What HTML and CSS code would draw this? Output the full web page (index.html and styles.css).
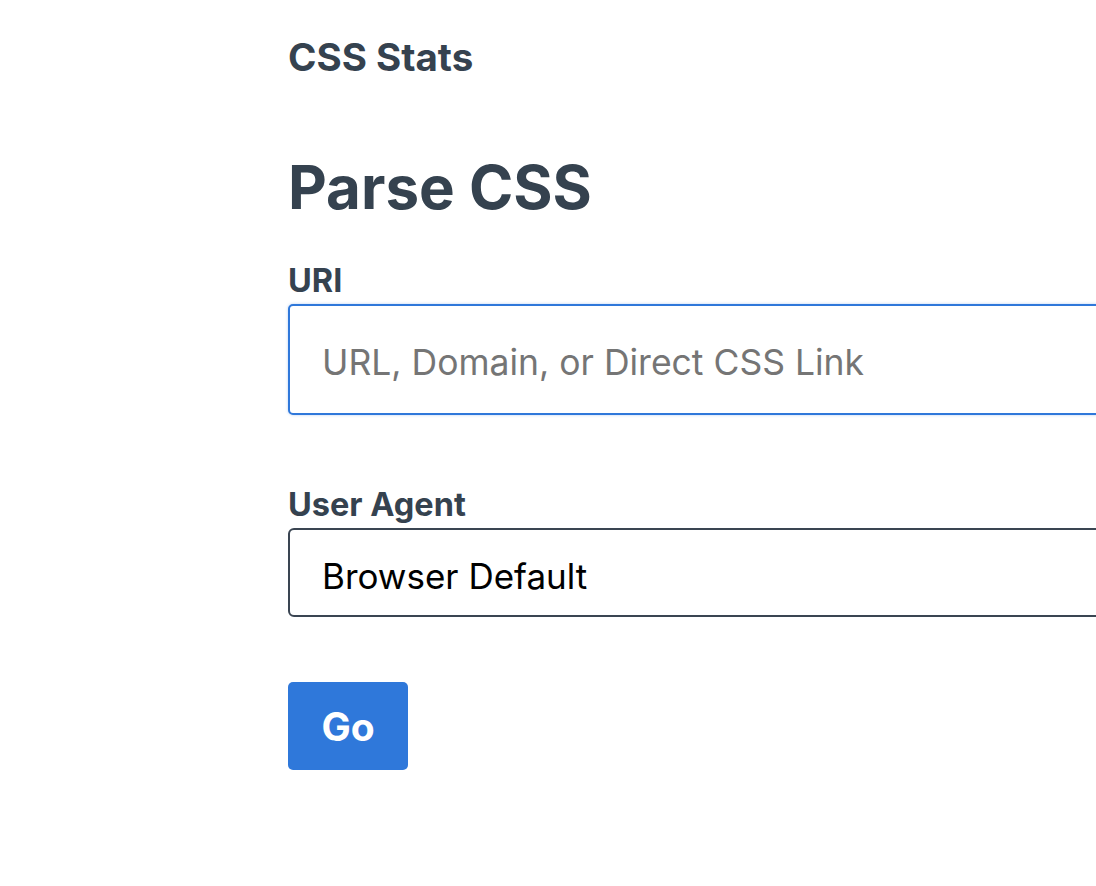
FILE: index.html
```html
<!DOCTYPE html>
<html>
<head>
<meta charset="utf-8">
<title>CSS Stats</title>
<link rel="stylesheet" href="styles.css">
</head>
<body>
<div class="page">
  <header class="site-header">
    <span class="brand">CSS Stats</span>
  </header>
  <main class="main">
    <h1 class="title">Parse CSS</h1>
    <form class="form">
      <div class="field">
        <label class="label" for="uri">URI</label>
        <input class="input" id="uri" type="text" placeholder="URL, Domain, or Direct CSS Link">
      </div>
      <div class="field">
        <label class="label" for="ua">User Agent</label>
        <div class="select" id="ua">Browser Default</div>
      </div>
      <div class="actions">
        <button class="button" type="button">Go</button>
      </div>
    </form>
  </main>
</div>
</body>
</html>
```
FILE: styles.css
```css
html, body {
  margin: 0;
  padding: 0;
  background: #ffffff;
  overflow: hidden;
}
body {
  font-family: Inter, "Noto Sans", "Liberation Sans", sans-serif;
  color: #35424f;
}
.page {
  padding-left: 288px;
  width: 960px;
}
.site-header {
  padding-top: 35px;
  height: 59px;
}
.brand {
  display: block;
  font-size: 38.5px;
  font-weight: 700;
  line-height: 44px;
}
.title {
  margin: 59px 0 0 0;
  font-size: 60px;
  font-weight: 700;
  line-height: 68px;
}
.form {
  display: flex;
  flex-direction: column;
  margin-top: 43px;
}
.field {
  display: flex;
  flex-direction: column;
}
.field + .field {
  margin-top: 73px;
}
.label {
  font-size: 32.5px;
  font-weight: 700;
  line-height: 34px;
  margin-bottom: 6px;
}
.input {
  box-sizing: border-box;
  height: 111px;
  border: 2px solid #2f78da;
  border-radius: 5px;
  box-shadow: 0 0 3px rgba(47, 120, 218, 0.35);
  padding: 6px 32px 0 32px;
  font-family: inherit;
  font-size: 35.5px;
  color: #222;
  outline: none;
  background: #fff;
}
.input::placeholder {
  color: #757575;
}
.select {
  box-sizing: border-box;
  height: 89px;
  border: 2px solid #3a4552;
  border-radius: 6px;
  padding: 6px 32px 0 32px;
  display: flex;
  align-items: center;
  font-size: 35px;
  color: #000;
  background: #fff;
}
.actions {
  margin-top: 65px;
}
.button {
  width: 120px;
  height: 88px;
  border: 0;
  border-radius: 5px;
  background: #2f78da;
  color: #fff;
  font-family: inherit;
  font-size: 39px;
  font-weight: 700;
  padding: 0;
}
```
